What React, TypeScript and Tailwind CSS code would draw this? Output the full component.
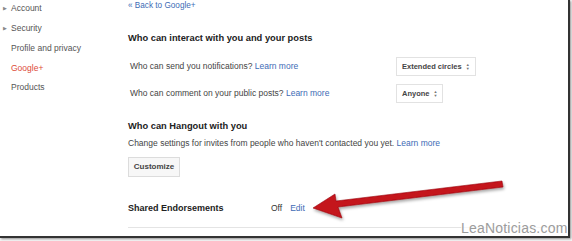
import React from "react";

const sideItems = [
  { label: "Account", arrow: true },
  { label: "Security", arrow: true },
  { label: "Profile and privacy" },
  { label: "Google+", active: true },
  { label: "Products" },
];

function Select({ label }: { label: string }) {
  return (
    <div className="flex h-[19px] items-center gap-[4px] border border-[#e2e2e2] bg-white px-[5px] text-[7.5px] font-bold text-[#444]">
      <span>{label}</span>
      <span className="flex flex-col leading-none text-[#777]">
        <span className="text-[4px]">▲</span>
        <span className="text-[4px]">▼</span>
      </span>
    </div>
  );
}

function App() {
  return (
    <div
      className="relative h-[241px] w-[572px] overflow-hidden bg-[#f4f4f4]"
      style={{ fontFamily: '"Liberation Sans", Arial, sans-serif' }}
    >
      <div className="relative h-[238px] w-[570px] border-b-[2px] border-r-[2px] border-[#333] bg-white shadow-[1px_1px_2px_rgba(0,0,0,0.4)]">
        <div className="flex">
          {/* sidebar */}
          <div className="-mt-[1px] w-[128px] shrink-0">
            {sideItems.map((it) => (
              <div key={it.label} className="flex h-[19.7px] items-center text-[8.5px]">
                <span className="w-[11px] pl-[3px] text-[5px] text-[#888]">{it.arrow ? "▶" : ""}</span>
                <span className={it.active ? "text-[#dd4b39]" : "text-[#555]"}>{it.label}</span>
              </div>
            ))}
          </div>

          {/* main */}
          <div className="flex-1 pr-[20px]">
            <div className="pt-[1px] text-[8.2px] leading-[9px] text-[#3d6bb5]">« Back to Google+</div>

            <div className="mt-[23px] text-[9.3px] font-bold leading-[11px] text-[#222]">
              Who can interact with you and your posts
            </div>

            <div className="mt-[13px] flex items-center text-[8.5px] text-[#444]">
              <div className="w-[268px] pl-[2px]">
                Who can send you notifications? <span className="text-[#3d6bb5]">Learn more</span>
              </div>
              <Select label="Extended circles" />
            </div>

            <div className="mt-[8px] flex items-center text-[8.5px] text-[#444]">
              <div className="w-[268px] pl-[2px]">
                Who can comment on your public posts? <span className="text-[#3d6bb5]">Learn more</span>
              </div>
              <Select label="Anyone" />
            </div>

            <div className="mt-[18px] text-[9.3px] font-bold leading-[11px] text-[#222]">Who can Hangout with you</div>
            <div className="mt-[6px] text-[8.5px] leading-[10px] text-[#444]">
              Change settings for invites from people who haven't contacted you yet.{" "}
              <span className="text-[#3d6bb5]">Learn more</span>
            </div>
            <div className="mt-[9px] flex h-[20px] w-[52px] items-center justify-center border border-[#dcdcdc] bg-[#f7f7f7] text-[8px] font-bold text-[#444]">
              Customize
            </div>

            <div className="mt-[26px] flex items-center text-[9px] leading-[10px]">
              <span className="w-[143px] font-bold text-[#222]">Shared Endorsements</span>
              <span className="text-[8.5px] text-[#333]">Off</span>
              <span className="ml-[8px] text-[8.5px] text-[#3d6bb5]">Edit</span>
            </div>
            <div className="mt-[14px] h-px w-[430px] bg-[#e4e4e4]" />
          </div>
        </div>

        {/* annotation arrow */}
        <svg className="absolute left-0 top-0" width="568" height="236" viewBox="0 0 568 236">
          <defs>
            <filter id="sh" x="-10%" y="-50%" width="120%" height="200%">
              <feDropShadow dx="1" dy="2" stdDeviation="1.5" floodColor="#000" floodOpacity="0.35" />
            </filter>
          </defs>
          <g filter="url(#sh)">
            <polygon
              points="313,208 335,194 336,201 502,181 503,187 338,207 342,218"
              fill="#c4121b"
              stroke="#9a0c12"
              strokeWidth="0.6"
              strokeLinejoin="round"
            />
          </g>
        </svg>

        {/* watermark */}
        <div className="absolute left-[461px] top-[220px] bg-white/70 text-[14px] leading-[16px] tracking-[0.2px] text-[#9c9c9c]">
          LeaNoticias.com
        </div>
      </div>
    </div>
  );
}

export default App;
